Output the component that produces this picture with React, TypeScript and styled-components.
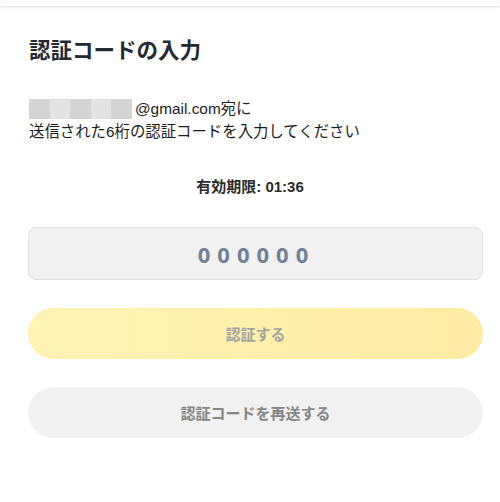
import styled, { createGlobalStyle } from 'styled-components';

const GlobalStyle = createGlobalStyle`
  html, body {
    margin: 0;
    padding: 0;
    background: #ffffff;
  }
  body {
    font-family: "Liberation Sans", "Noto Sans CJK JP", sans-serif;
    -webkit-font-smoothing: antialiased;
  }
`;

const TopBar = styled.div`
  height: 6px;
  background: #ffffff;
  box-shadow: 0 1px 3px rgba(0, 0, 0, 0.12);
`;

const Page = styled.main`
  width: 455px;
  padding: 31px 0 0 28px;
  display: flex;
  flex-direction: column;
`;

const Title = styled.h1`
  margin: 0;
  font-size: 21.5px;
  line-height: 28px;
  font-weight: 700;
  color: #232a33;
  padding-left: 1px;
`;

const Message = styled.div`
  margin-top: 32px;
  font-size: 15.4px;
  line-height: 23px;
  color: #1c1c1c;
  padding-left: 1px;
`;

const EmailLine = styled.div`
  display: flex;
  align-items: center;
  height: 23px;
`;

const Mask = styled.span`
  display: flex;
  margin-right: 3px;
`;

const MaskBlock = styled.span<{ light?: boolean }>`
  width: 20.6px;
  height: 20px;
  background: ${p => (p.light ? '#e2e2e2' : '#d4d4d4')};
`;

const Expiry = styled.div`
  margin-top: 34px;
  padding-right: 11px;
  text-align: center;
  font-size: 15px;
  line-height: 20px;
  font-weight: 700;
  color: #2b2b2b;
`;

const CodeInput = styled.input`
  box-sizing: border-box;
  margin-top: 30px;
  width: 455px;
  height: 53px;
  border: 1px solid #e1e1e1;
  border-radius: 8px;
  background: #f1f1f1;
  text-align: center;
  font-family: "Open Sans", "Liberation Sans", sans-serif;
  font-size: 22px;
  font-weight: 700;
  letter-spacing: 7px;
  padding-left: 4px;
  color: #718096;
  outline: none;
  &::placeholder {
    color: #718096;
    opacity: 1;
  }
`;

const PillButton = styled.button<{ variant: 'primary' | 'secondary' }>`
  box-sizing: border-box;
  width: 455px;
  height: 51px;
  border: none;
  border-radius: 26px;
  font-family: "Liberation Sans", "Noto Sans CJK JP", sans-serif;
  font-size: 15px;
  font-weight: 700;
  margin-top: 28px;
  background: ${p =>
    p.variant === 'primary'
      ? 'linear-gradient(90deg, #fff3b5 0%, #ffeba3 100%)'
      : '#f1f1f1'};
  color: ${p => (p.variant === 'primary' ? '#a3a3a3' : '#858585')};
  cursor: default;
`;

export default function App() {
  const maskShades = [false, true, false, true, false];

  return <>
    <GlobalStyle />
    <TopBar />
    <Page>
      <Title>認証コードの入力</Title>
      <Message>
        <EmailLine>
          <Mask>
            {maskShades.map((light, i) => <MaskBlock key={i} light={light} />)}
          </Mask>
          @gmail.com宛に
        </EmailLine>
        <div>送信された6桁の認証コードを入力してください</div>
      </Message>
      <Expiry>有効期限: 01:36</Expiry>
      <CodeInput placeholder="000000" inputMode="numeric" maxLength={6} />
      <PillButton variant="primary" disabled>認証する</PillButton>
      <PillButton variant="secondary">認証コードを再送する</PillButton>
    </Page>
  </>
}
